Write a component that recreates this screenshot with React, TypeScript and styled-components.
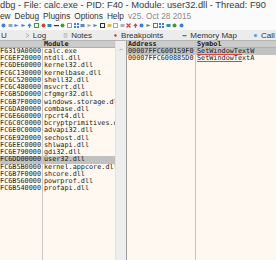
import React from 'react'
import styled, { createGlobalStyle } from 'styled-components'

const GlobalStyle = createGlobalStyle`
  html, body {
    margin: 0;
    padding: 0;
    background: #ffffff;
    overflow: hidden;
  }
`

const Window = styled.div`
  width: 276px;
  height: 260px;
  display: flex;
  flex-direction: column;
  overflow: hidden;
  background: #fbfbfb;
  font-family: 'Liberation Sans', Arial, sans-serif;
`

const TitleBar = styled.div`
  height: 11px;
  line-height: 11px;
  font-size: 9.3px;
  color: #3a3a3a;
  white-space: nowrap;
  overflow: hidden;
`

const MenuBar = styled.div`
  height: 10px;
  display: flex;
  align-items: center;
  gap: 4px;
  font-size: 8.3px;
  color: #2a2a2a;
  white-space: nowrap;
`

const MenuItem = styled.span<{ $muted?: boolean }>`
  color: ${(p) => (p.$muted ? '#8a8a8a' : '#333333')};
`

const Toolbar = styled.div`
  height: 9px;
  display: flex;
  align-items: center;
  gap: 1.6px;
  padding-left: 1px;
`

const TabBar = styled.div`
  height: 10px;
  display: flex;
  align-items: center;
  background: #ececec;
  border-bottom: 1px solid #b4b4b4;
  font-size: 8px;
  color: #333;
  white-space: nowrap;
`

const Tab = styled.div<{ $left: number }>`
  display: flex;
  align-items: center;
  gap: 3px;
  margin-left: ${(p) => p.$left}px;
`

const Panes = styled.div`
  flex: 1;
  display: flex;
  min-height: 0;
  background: #fff8f0;
  font-family: 'DejaVu Sans Mono', 'Liberation Mono', monospace;
  font-size: 6.8px;
  color: #1a1a1a;
`

const Pane = styled.div<{ $width?: number }>`
  display: flex;
  ${(p) => (p.$width ? `width: ${p.$width}px;` : 'flex: 1;')}
  border-right: ${(p) => (p.$width ? '1px solid #9c9c9c' : 'none')};
  overflow: hidden;
`

const Column = styled.div<{ $width?: number; $line?: boolean }>`
  display: flex;
  flex-direction: column;
  ${(p) => (p.$width ? `width: ${p.$width}px;` : 'flex: 1;')}
  border-right: ${(p) => (p.$line ? '1px solid #c8c4bf' : 'none')};
  overflow: hidden;
  flex-shrink: 0;
`

const HeadCell = styled.div`
  height: 6px;
  line-height: 6px;
  background: #cbcbcb;
  border-bottom: 1px solid #b0b0b0;
  font-weight: bold;
  padding-left: 1px;
  white-space: nowrap;
`

const Cell = styled.div<{ $selected?: boolean; $right?: boolean }>`
  height: 7.22px;
  line-height: 7.22px;
  white-space: nowrap;
  overflow: hidden;
  display: flex;
  justify-content: ${(p) => (p.$right ? 'flex-end' : 'flex-start')};
  padding: ${(p) => (p.$right ? '0 1px 0 0' : '0 0 0 1px')};
  background: ${(p) => (p.$selected ? '#c1c1c1' : 'transparent')};
`

const Under = styled.span`
  border-bottom: 1px solid #e0403c;
`

const Scrollbar = styled.div`
  width: 10px;
  background: #eeeeee;
  border-left: 1px solid #e2e2e2;
  display: flex;
  justify-content: center;
  flex-shrink: 0;
`

const ArrowUp = styled.div`
  margin-top: 7px;
  font-family: 'DejaVu Sans', sans-serif;
  font-size: 6px;
  line-height: 6px;
  color: #7a7a7a;
`

const modules: [string, string][] = [
  ['00007FF6319A0000', 'calc.exe'],
  ['00007FFC6EF20000', 'ntdll.dll'],
  ['00007FFC6DE60000', 'kernel32.dll'],
  ['00007FFC6C130000', 'kernelbase.dll'],
  ['00007FFC6C520000', 'shell32.dll'],
  ['00007FFC6C480000', 'msvcrt.dll'],
  ['00007FFC6B5D0000', 'cfgmgr32.dll'],
  ['00007FFC6B7F0000', 'windows.storage.dll'],
  ['00007FFC6DA80000', 'combase.dll'],
  ['00007FFC6E660000', 'rpcrt4.dll'],
  ['00007FFC6C0C0000', 'bcryptprimitives.dll'],
  ['00007FFC6E0C0000', 'advapi32.dll'],
  ['00007FFC6E920000', 'sechost.dll'],
  ['00007FFC6EEC0000', 'shlwapi.dll'],
  ['00007FFC6E790000', 'gdi32.dll'],
  ['00007FFC6DD00000', 'user32.dll'],
  ['00007FFC6B5B0000', 'kernel.appcore.dll'],
  ['00007FFC6B7F0000', 'shcore.dll'],
  ['00007FFC6B560000', 'powrprof.dll'],
  ['00007FFC6B540000', 'profapi.dll'],
]

const selectedModule = 15

// tiny toolbar glyphs: [colour, shape]
const tools: [string, string][] = [
  ['#3d7fd8', 'dot'], ['#9aa6b8', 'bar'], ['#3d7fd8', 'arrow'], ['#3d7fd8', 'arrow'],
  ['#3d7fd8', 'up'], ['#3f9a3a', 'box'], ['#c84a3a', 'dot'], ['#3d7fd8', 'bar'],
  ['#333333', 'dash'], ['#3f9a3a', 'dot'], ['#9a9a9a', 'box'], ['#3d7fd8', 'grid'],
  ['#5a86c8', 'bar'], ['#a0a0a0', 'arrow'], ['#3d7fd8', 'arrow'], ['#333333', 'box'],
  ['#e0b84a', 'bar'], ['#e0a060', 'box'], ['#b0b0b0', 'bar'], ['#d0403a', 'x'],
  ['#d0403a', 'up'], ['#3d7fd8', 'dot'], ['#3f9a3a', 'arrow'], ['#3d7fd8', 'box'],
  ['#3d7fd8', 'grid'], ['#2f9a8a', 'bar'], ['#3f9a3a', 'dot'], ['#3d7fd8', 'dot'],
]

const ToolIcon = ({ color, shape }: { color: string; shape: string }) => (
  <svg width="5" height="5" viewBox="0 0 5 5">
    {shape === 'dot' && <circle cx="2.5" cy="2.5" r="2" fill={color} />}
    {shape === 'box' && <rect x="0.5" y="0.5" width="4" height="4" fill="none" stroke={color} />}
    {shape === 'bar' && <rect x="0.5" y="1" width="4" height="3" fill={color} />}
    {shape === 'dash' && <rect x="0" y="2" width="5" height="1.2" fill={color} />}
    {shape === 'arrow' && <path d="M0.5 1 L4.5 2.5 L0.5 4 Z" fill={color} />}
    {shape === 'up' && <path d="M2.5 0.3 L4.7 3 L3.2 3 L3.2 4.8 L1.8 4.8 L1.8 3 L0.3 3 Z" fill={color} />}
    {shape === 'grid' && (
      <g fill={color}>
        <rect x="0" y="0" width="2" height="2" />
        <rect x="3" y="0" width="2" height="2" />
        <rect x="0" y="3" width="2" height="2" />
        <rect x="3" y="3" width="2" height="2" />
      </g>
    )}
    {shape === 'x' && <path d="M0.5 0.5 L4.5 4.5 M4.5 0.5 L0.5 4.5" stroke={color} strokeWidth="1.1" />}
  </svg>
)

const TabIcon = ({ kind }: { kind: string }) => (
  <svg width="5" height="5" viewBox="0 0 5 5">
    {kind === 'log' && <path d="M1 0.5 L4 2.5 L1 4.5" fill="none" stroke="#a8a8a8" strokeWidth="0.9" />}
    {kind === 'notes' && <rect x="1" y="0.5" width="3" height="4" fill="#d6d6d6" stroke="#b0b0b0" strokeWidth="0.5" />}
    {kind === 'bp' && <circle cx="2.5" cy="2.5" r="1.3" fill="#d8323a" />}
    {kind === 'mem' && <rect x="0.5" y="2" width="4" height="1.3" fill="#2c9a3a" />}
    {kind === 'call' && <circle cx="2.5" cy="2.5" r="1.6" fill="#5c9ce0" />}
  </svg>
)

const App = () => {
  return (
    <>
      <GlobalStyle />
      <Window>
        <TitleBar>dbg - File: calc.exe - PID: F40 - Module: user32.dll - Thread: F90</TitleBar>
        <MenuBar>
          <MenuItem>ew</MenuItem>
          <MenuItem>Debug</MenuItem>
          <MenuItem>Plugins</MenuItem>
          <MenuItem>Options</MenuItem>
          <MenuItem>Help</MenuItem>
          <MenuItem $muted>v25. Oct 28 2015</MenuItem>
        </MenuBar>
        <Toolbar>
          {tools.map(([c, s], i) => (
            <ToolIcon key={i} color={c} shape={s} />
          ))}
        </Toolbar>
        <TabBar>
          <Tab $left={1}>U</Tab>
          <Tab $left={18}>
            <TabIcon kind="log" />
            Log
          </Tab>
          <Tab $left={17}>
            <TabIcon kind="notes" />
            Notes
          </Tab>
          <Tab $left={21}>
            <TabIcon kind="bp" />
            Breakpoints
          </Tab>
          <Tab $left={19}>
            <TabIcon kind="mem" />
            Memory Map
          </Tab>
          <Tab $left={16}>
            <TabIcon kind="call" />
            Call
          </Tab>
        </TabBar>
        <Panes>
          <Pane $width={126}>
            <Column $width={42} $line>
              <HeadCell>&nbsp;</HeadCell>
              {modules.map(([addr], i) => (
                <Cell key={i} $right $selected={i === selectedModule}>
                  {addr}
                </Cell>
              ))}
            </Column>
            <Column>
              <HeadCell>Module</HeadCell>
              {modules.map(([, name], i) => (
                <Cell key={i} $selected={i === selectedModule}>
                  {name}
                </Cell>
              ))}
            </Column>
            <Scrollbar>
              <ArrowUp>^</ArrowUp>
            </Scrollbar>
          </Pane>
          <Pane>
            <Column $width={68} $line>
              <HeadCell>Address</HeadCell>
              <Cell $selected>00007FFC6001S9F0</Cell>
              <Cell>00007FFC600885D0</Cell>
            </Column>
            <Column>
              <HeadCell>Symbol</HeadCell>
              <Cell $selected>
                <Under>SetWindowTe</Under>xtW
              </Cell>
              <Cell>
                <Under>SetWindowTe</Under>xtA
              </Cell>
            </Column>
          </Pane>
        </Panes>
      </Window>
    </>
  )
}

export default App
